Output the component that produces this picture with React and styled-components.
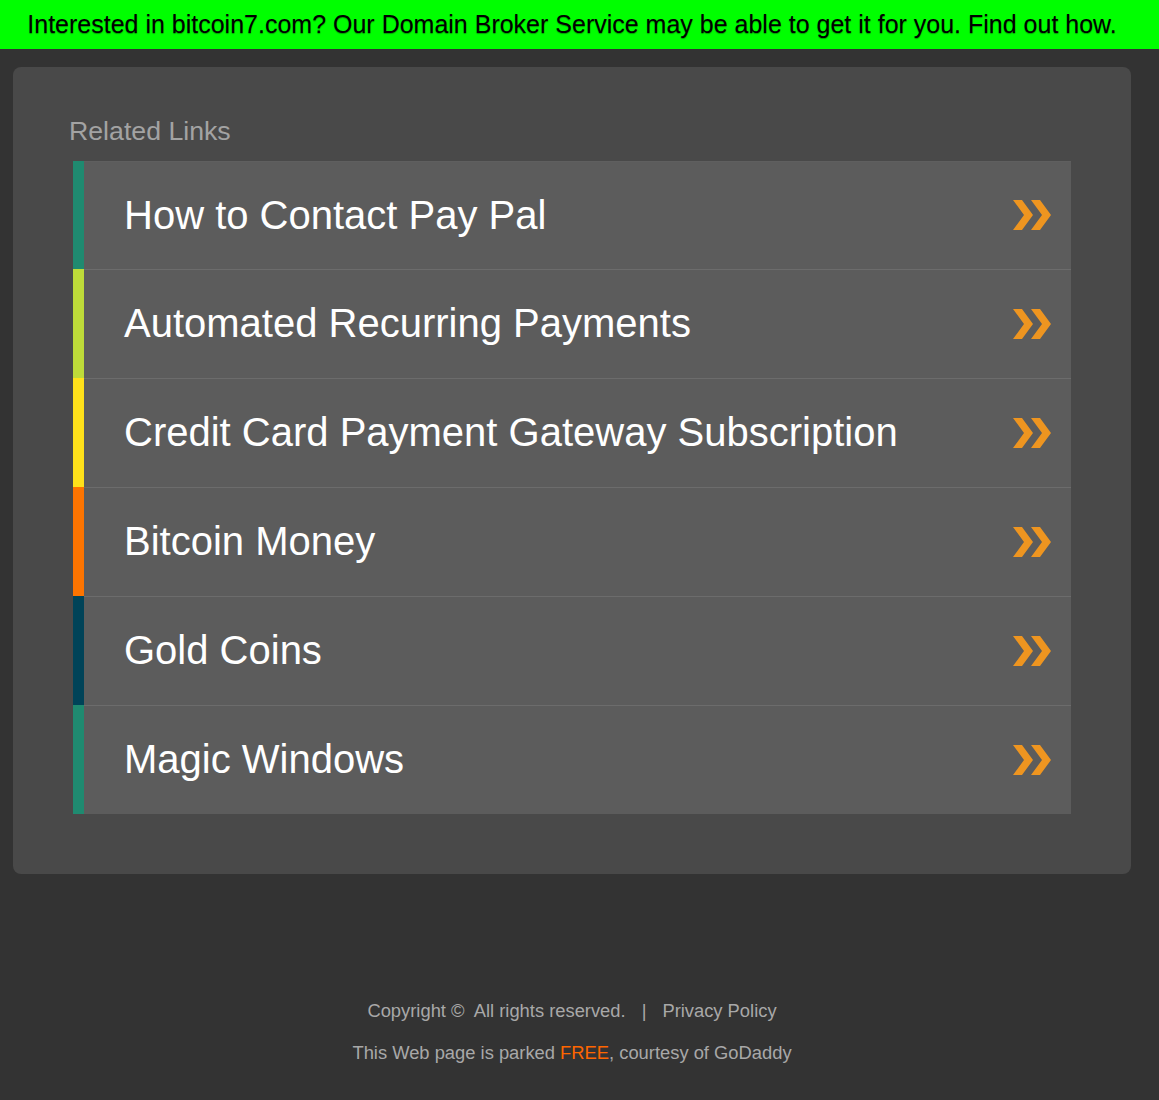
import React from "react";
import styled, { createGlobalStyle } from "styled-components";

const GlobalStyle = createGlobalStyle`
  html, body {
    margin: 0;
    padding: 0;
    background: #333333;
    font-family: "Liberation Sans", Arial, sans-serif;
  }
`;

const Page = styled.div`
  min-height: 1100px;
  background: #333333;
`;

const TopBar = styled.div`
  height: 49px;
  padding-right: 15px;
  background: #00ff00;
  display: flex;
  align-items: center;
  justify-content: center;
  font-size: 25px;
  color: #000;
  text-shadow: 0 1px 1px rgba(0, 0, 0, 0.35);
`;

const Content = styled.div`
  width: 1144px;
`;

const Panel = styled.div`
  margin: 18px 13px 0;
  padding: 49px 56px 60px;
  background: #494949;
  border-radius: 8px;
`;

const Heading = styled.h2`
  margin: 0 0 15px;
  font-size: 26.7px;
  font-weight: 400;
  line-height: 30px;
  color: #a3a3a3;
`;

const List = styled.div`
  margin: 0 4px;
  display: flex;
  flex-direction: column;
`;

const Row = styled.a`
  display: flex;
  align-items: center;
  height: 108px;
  background: #5c5c5c;
  border-left: 11px solid ${(p) => p.accent};
  text-decoration: none;
  box-shadow: inset 0 1px 0 ${(p) => (p.first ? "#5f5f5f" : "#6c6c6c")};
  & + & {
    height: 109px;
  }
`;

const Label = styled.span`
  flex: 1;
  padding-left: 40px;
  font-size: 40px;
  color: #ffffff;
`;

const Arrow = styled.svg`
  width: 40px;
  height: 32px;
  margin-right: 19px;
  filter: blur(0.4px);
`;

const Footer = styled.footer`
  margin-top: 116px;
  text-align: center;
  font-size: 18.35px;
  color: #a8a8a8;
  line-height: 42px;
`;

const Sep = styled.span`
  margin: 0 16px;
`;

const Free = styled.span`
  color: #ff6600;
`;

const links = [
  { text: "How to Contact Pay Pal", color: "#1f8a70" },
  { text: "Automated Recurring Payments", color: "#bedb39" },
  { text: "Credit Card Payment Gateway Subscription", color: "#ffe11a" },
  { text: "Bitcoin Money", color: "#fd7400" },
  { text: "Gold Coins", color: "#004358" },
  { text: "Magic Windows", color: "#1f8a70" },
];

function DoubleChevron() {
  return (
    <Arrow viewBox="0 0 40 32">
      <polygon points="1,1 10,1 21,16 10,31 1,31 12,16" fill="#ee9520" />
      <polygon points="19,1 28,1 39,16 28,31 19,31 30,16" fill="#ee9520" />
    </Arrow>
  );
}

export default function App() {
  return (
    <Page>
      <GlobalStyle />
      <TopBar>
        Interested in bitcoin7.com? Our Domain Broker Service may be able to get it for you. Find out how.
      </TopBar>
      <Content>
        <Panel>
          <Heading>Related Links</Heading>
          <List>
            {links.map((l, i) => (
              <Row key={l.text} href="#" accent={l.color} first={i === 0}>
                <Label>{l.text}</Label>
                <DoubleChevron />
              </Row>
            ))}
          </List>
        </Panel>
        <Footer>
          <div>
            Copyright ©&nbsp; All rights reserved.<Sep>|</Sep>Privacy Policy
          </div>
          <div>
            This Web page is parked <Free>FREE</Free>, courtesy of GoDaddy
          </div>
        </Footer>
      </Content>
    </Page>
  );
}
